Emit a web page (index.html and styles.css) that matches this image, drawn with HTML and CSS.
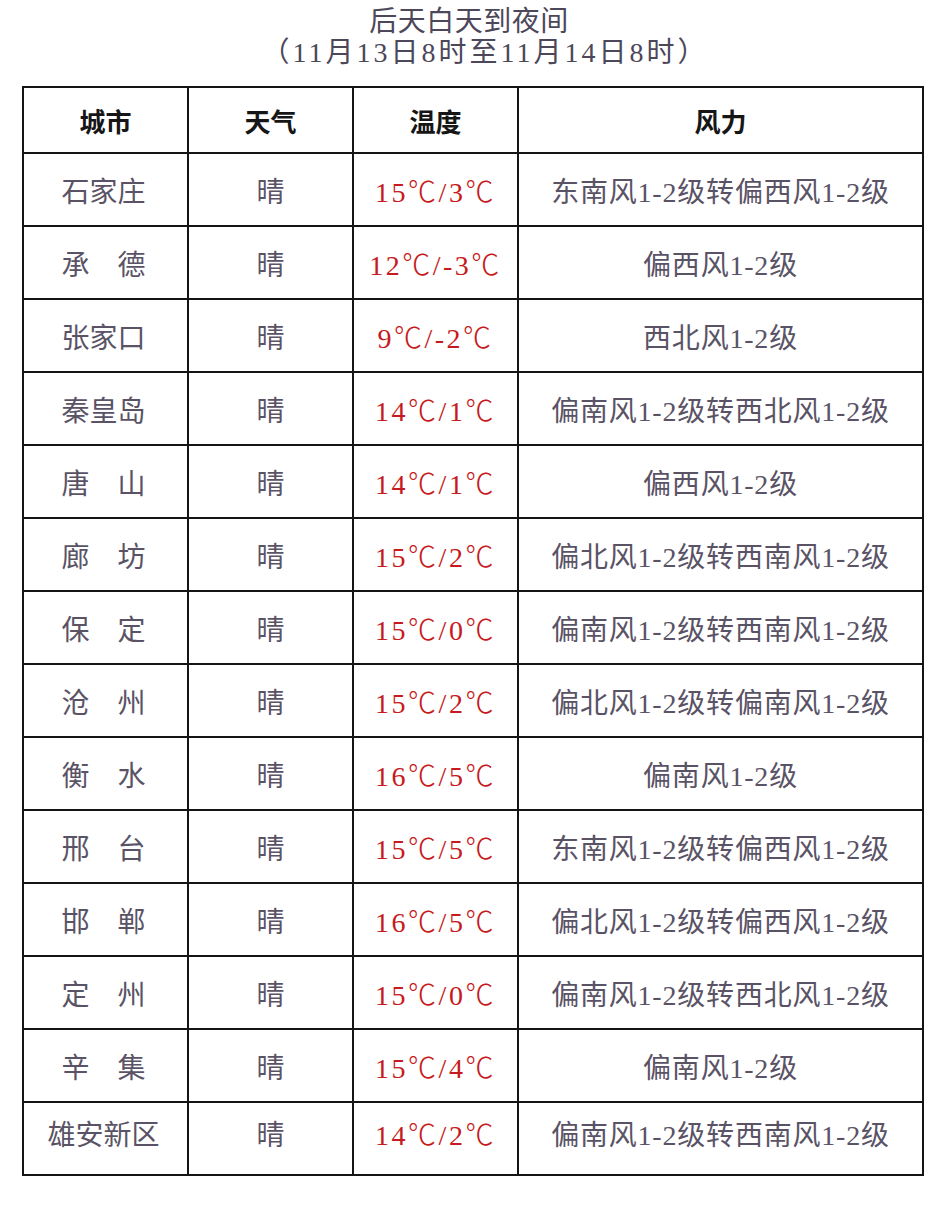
FILE: index.html
```html
<!DOCTYPE html>
<html lang="zh-CN">
<head>
<meta charset="utf-8">
<title>后天白天到夜间</title>
<link rel="stylesheet" href="styles.css">
</head>
<body>
<div class="page">
  <div class="title">
    <div class="title-line">后天白天到夜间</div>
    <div class="title-line sub">（11月13日8时至11月14日8时）</div>
  </div>
  <table class="weather">
    <colgroup>
      <col class="c-city"><col class="c-sky"><col class="c-temp"><col class="c-wind">
    </colgroup>
    <thead>
      <tr><th>城市</th><th>天气</th><th>温度</th><th>风力</th></tr>
    </thead>
    <tbody>
      <tr><td>石家庄</td><td>晴</td><td class="temp">15<span class="deg">℃</span>/3<span class="deg">℃</span></td><td class="wind">东南风1-2级转偏西风1-2级</td></tr>
      <tr><td>承　德</td><td>晴</td><td class="temp">12<span class="deg">℃</span>/-3<span class="deg">℃</span></td><td class="wind">偏西风1-2级</td></tr>
      <tr><td>张家口</td><td>晴</td><td class="temp">9<span class="deg">℃</span>/-2<span class="deg">℃</span></td><td class="wind">西北风1-2级</td></tr>
      <tr><td>秦皇岛</td><td>晴</td><td class="temp">14<span class="deg">℃</span>/1<span class="deg">℃</span></td><td class="wind">偏南风1-2级转西北风1-2级</td></tr>
      <tr><td>唐　山</td><td>晴</td><td class="temp">14<span class="deg">℃</span>/1<span class="deg">℃</span></td><td class="wind">偏西风1-2级</td></tr>
      <tr><td>廊　坊</td><td>晴</td><td class="temp">15<span class="deg">℃</span>/2<span class="deg">℃</span></td><td class="wind">偏北风1-2级转西南风1-2级</td></tr>
      <tr><td>保　定</td><td>晴</td><td class="temp">15<span class="deg">℃</span>/0<span class="deg">℃</span></td><td class="wind">偏南风1-2级转西南风1-2级</td></tr>
      <tr><td>沧　州</td><td>晴</td><td class="temp">15<span class="deg">℃</span>/2<span class="deg">℃</span></td><td class="wind">偏北风1-2级转偏南风1-2级</td></tr>
      <tr><td>衡　水</td><td>晴</td><td class="temp">16<span class="deg">℃</span>/5<span class="deg">℃</span></td><td class="wind">偏南风1-2级</td></tr>
      <tr><td>邢　台</td><td>晴</td><td class="temp">15<span class="deg">℃</span>/5<span class="deg">℃</span></td><td class="wind">东南风1-2级转偏西风1-2级</td></tr>
      <tr><td>邯　郸</td><td>晴</td><td class="temp">16<span class="deg">℃</span>/5<span class="deg">℃</span></td><td class="wind">偏北风1-2级转偏西风1-2级</td></tr>
      <tr><td>定　州</td><td>晴</td><td class="temp">15<span class="deg">℃</span>/0<span class="deg">℃</span></td><td class="wind">偏南风1-2级转西北风1-2级</td></tr>
      <tr><td>辛　集</td><td>晴</td><td class="temp">15<span class="deg">℃</span>/4<span class="deg">℃</span></td><td class="wind">偏南风1-2级</td></tr>
      <tr class="last"><td>雄安新区</td><td>晴</td><td class="temp">14<span class="deg">℃</span>/2<span class="deg">℃</span></td><td class="wind">偏南风1-2级转西南风1-2级</td></tr>
    </tbody>
  </table>
</div>
</body>
</html>
```

FILE: styles.css
```css
html, body {
  margin: 0;
  padding: 0;
  background: #ffffff;
}

body {
  font-family: "Liberation Serif", "Noto Sans CJK SC", serif;
  color: #575063;
}

.page {
  width: 942px;
  padding-top: 6px;
}

.title {
  text-align: center;
  color: #4d475a;
  font-size: 28px;
  line-height: 31px;
  letter-spacing: 0.5px;
}

.title-line {
  margin-left: -4px;
}

.title-line.sub {
  margin-left: 0;
  padding-left: 28px;
  letter-spacing: 3px;
}

.weather {
  margin: 18px 0 0 22px;
  width: 900px;
  border-collapse: collapse;
  table-layout: fixed;
}

.c-city, .c-sky, .c-temp { width: 165px; }
.c-wind { width: 405px; }

.weather th,
.weather td {
  border: 2px solid #141414;
  text-align: center;
  vertical-align: middle;
  padding: 0;
  white-space: nowrap;
}

.weather th {
  height: 64px;
  font-size: 26px;
  font-weight: 700;
  color: #161616;
}

.weather td {
  height: 71px;
  font-size: 28px;
  color: #5a5366;
}

.weather td:first-child {
  padding-right: 4px;
}

.weather td.wind {
  letter-spacing: 0.8px;
}

.weather td.temp {
  color: #c61a20;
  letter-spacing: 2.5px;
}

.deg {
  font-family: "Noto Sans CJK SC", sans-serif;
  font-weight: 300;
}

.weather tr.last td {
  vertical-align: top;
  padding-top: 10px;
  height: 61px;
}
```
